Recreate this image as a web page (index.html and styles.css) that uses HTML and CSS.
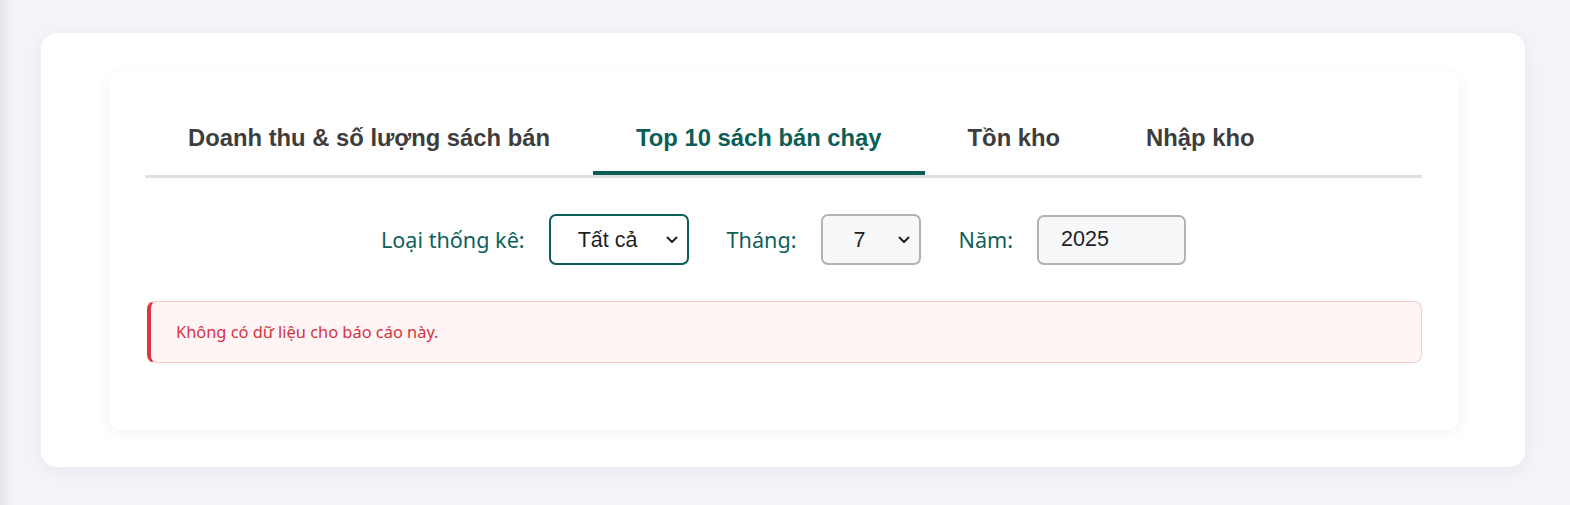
FILE: index.html
```html
<!DOCTYPE html>
<html lang="vi">
<head>
<meta charset="utf-8">
<title>Báo cáo</title>
<link rel="stylesheet" href="styles.css">
</head>
<body>
<div class="edge"></div>
<main class="main">
  <section class="outer-card">
    <div class="inner-card">
      <nav class="tabs">
        <button class="tab">Doanh thu &amp; số lượng sách bán</button>
        <button class="tab active">Top 10 sách bán chạy</button>
        <button class="tab">Tồn kho</button>
        <button class="tab">Nhập kho</button>
      </nav>
      <div class="filters">
        <div class="group">
          <label class="label">Loại thống kê:</label>
          <span class="select-wrap">
            <select class="select select-type">
              <option>Tất cả</option>
            </select>
            <svg class="chev" width="12" height="8" viewBox="0 0 12 8"><path d="M1.5 1.5 L6 6 L10.5 1.5" fill="none" stroke="#222" stroke-width="2" stroke-linecap="round" stroke-linejoin="round"/></svg>
          </span>
        </div>
        <div class="group">
          <label class="label">Tháng:</label>
          <span class="select-wrap">
            <select class="select select-month">
              <option>7</option>
            </select>
            <svg class="chev" width="12" height="8" viewBox="0 0 12 8"><path d="M1.5 1.5 L6 6 L10.5 1.5" fill="none" stroke="#222" stroke-width="2" stroke-linecap="round" stroke-linejoin="round"/></svg>
          </span>
        </div>
        <div class="group">
          <label class="label">Năm:</label>
          <input class="input-year" type="text" value="2025">
        </div>
      </div>
      <div class="alert">Không có dữ liệu cho báo cáo này.</div>
    </div>
  </section>
</main>
</body>
</html>
```

FILE: styles.css
```css
html, body {
  margin: 0;
  padding: 0;
}
body {
  background: #f3f4f8;
  font-family: "Noto Sans", "Liberation Sans", sans-serif;
  width: 1570px;
  height: 505px;
  overflow: hidden;
  position: relative;
}
.edge {
  position: absolute;
  left: 0;
  top: 0;
  bottom: 0;
  width: 14px;
  background: linear-gradient(to right, #e6e7ec, rgba(243, 244, 248, 0));
}
.main {
  padding: 33px 45px 0 41px;
}
.outer-card {
  background: #fff;
  border-radius: 16px;
  box-shadow: 0 4px 18px rgba(30, 40, 80, 0.05);
  padding: 38px 66px 37px 68px;
}
.inner-card {
  background: #fff;
  border-radius: 12px;
  box-shadow: 0 2px 14px rgba(0, 0, 0, 0.06);
  padding: 35px 37px 67px 36px;
}
.tabs {
  display: flex;
  border-bottom: 3px solid #e0e0e0;
}
.tab {
  font-family: "Liberation Sans", Arial, sans-serif;
  font-weight: 700;
  font-size: 23.8px;
  line-height: 28px;
  color: #3d3d3d;
  background: none;
  border: none;
  border-bottom: 4px solid transparent;
  padding: 18px 43px 19px;
  margin: 0;
  cursor: pointer;
}
.tab.active {
  color: #0b5e57;
  border-bottom-color: #0b5e57;
}
.filters {
  display: flex;
  justify-content: center;
  align-items: center;
  gap: 38px;
  margin-top: 36px;
}
.group {
  display: flex;
  align-items: center;
  gap: 24px;
}
.label {
  font-size: 21.6px;
  color: #0f5f5a;
}
.select-wrap {
  position: relative;
  display: inline-flex;
}
.chev {
  position: absolute;
  right: 11px;
  top: 22px;
  pointer-events: none;
}
.select {
  -webkit-appearance: none;
  appearance: none;
  font-family: "Liberation Sans", Arial, sans-serif;
  font-size: 21.5px;
  color: #1f1f1f;
  height: 51px;
  box-sizing: border-box;
  border-radius: 7px;
  text-align: center;
  text-align-last: center;
  padding: 0 22px 0 0;
  margin: 0;
  outline: none;
}
.select-type {
  width: 140px;
  border: 2px solid #0b5e57;
  background: #fff;
}
.select-month {
  width: 100px;
  border: 2px solid #b3b3b3;
  background: #f7f8fa;
}
.input-year {
  font-family: "Liberation Sans", Arial, sans-serif;
  font-size: 21.5px;
  color: #1f1f1f;
  width: 149px;
  height: 50px;
  box-sizing: border-box;
  border: 2px solid #b3b3b3;
  border-radius: 7px;
  background: #f7f8fa;
  padding: 0 22px;
  margin: 0;
}
.alert {
  margin-top: 36px;
  margin-left: 2px;
  background: #fff5f5;
  border: 1px solid #f8c9cc;
  border-left: 4px solid #dc3545;
  border-radius: 8px;
  color: #d6323f;
  font-size: 16.4px;
  line-height: 20px;
  padding: 20px 25px 20px;
}
```
